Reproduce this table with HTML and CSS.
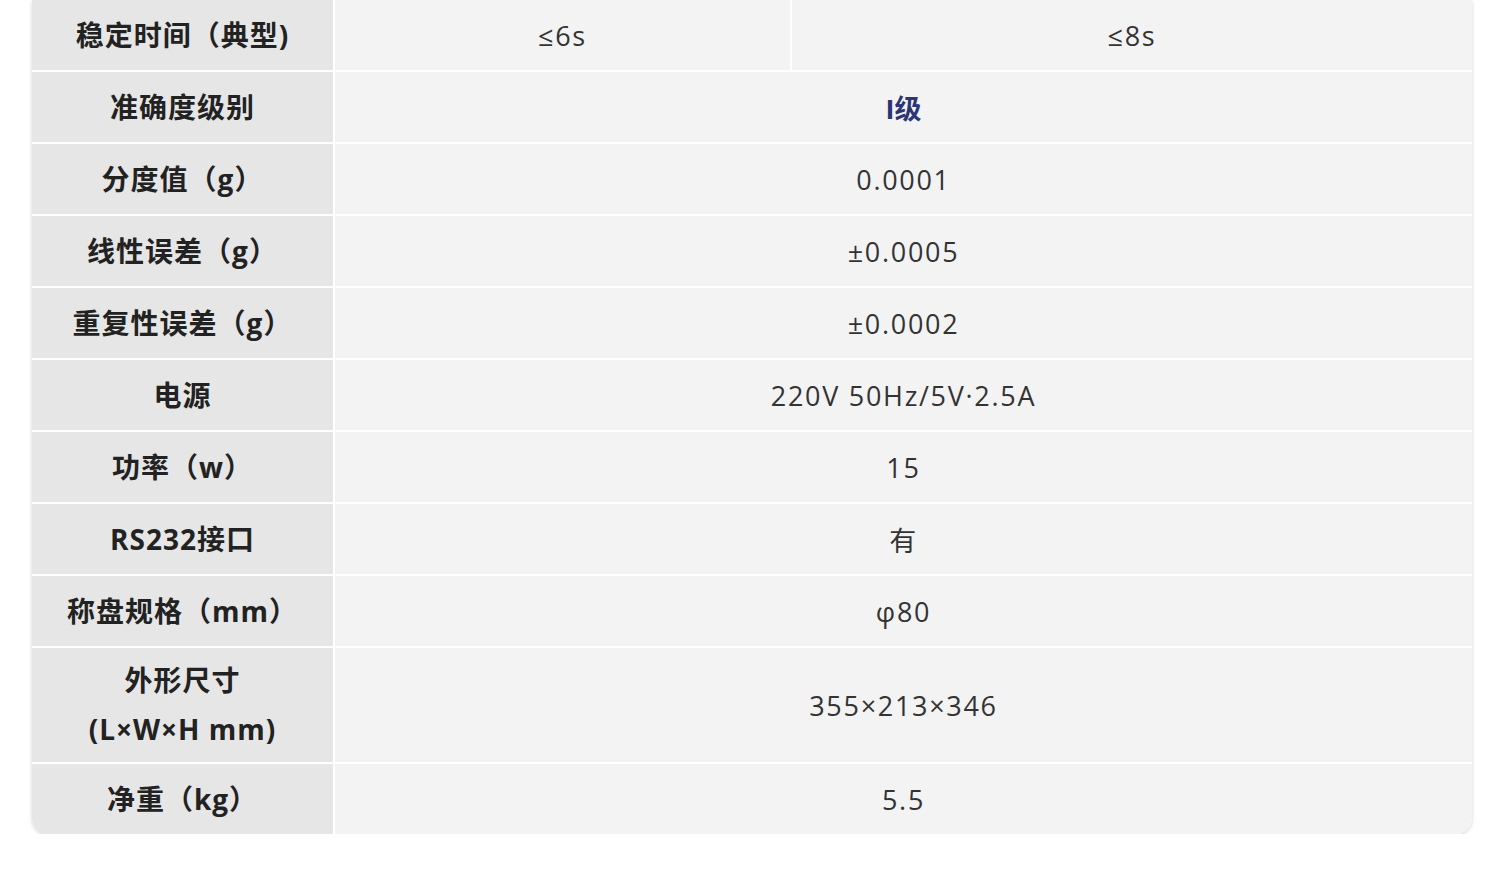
FILE: index.html
```html
<!DOCTYPE html>
<html lang="zh-CN">
<head>
<meta charset="utf-8">
<title>技术参数</title>
<link rel="stylesheet" href="styles.css">
</head>
<body>
<div class="card">
  <div class="spec">
    <div class="label">稳定时间（典型)</div>
    <div class="value">≤6s</div>
    <div class="value">≤8s</div>

    <div class="label">准确度级别</div>
    <div class="value span"><span class="accent">I级</span></div>

    <div class="label">分度值（g）</div>
    <div class="value span">0.0001</div>

    <div class="label">线性误差（g）</div>
    <div class="value span">±0.0005</div>

    <div class="label">重复性误差（g）</div>
    <div class="value span">±0.0002</div>

    <div class="label">电源</div>
    <div class="value span">220V 50Hz/5V·2.5A</div>

    <div class="label">功率（w）</div>
    <div class="value span">15</div>

    <div class="label">RS232接口</div>
    <div class="value span">有</div>

    <div class="label">称盘规格（mm）</div>
    <div class="value span">φ80</div>

    <div class="label">外形尺寸<br>(L×W×H mm)</div>
    <div class="value span">355×213×346</div>

    <div class="label">净重（kg）</div>
    <div class="value span">5.5</div>
  </div>
</div>
</body>
</html>
```

FILE: styles.css
```css
html, body {
  margin: 0;
  padding: 0;
  background: #ffffff;
}

body {
  font-family: "Open Sans", "Noto Sans CJK SC", sans-serif;
}

.card {
  margin-left: 32px;
  width: 1440px;
  border-radius: 0 0 16px 16px;
  overflow: hidden;
  box-shadow: 0 2px 4px rgba(0, 0, 0, 0.13), 0 0 3px rgba(0, 0, 0, 0.05);
  background: #ffffff;
}

.spec {
  display: grid;
  grid-template-columns: 301px 455px 680px;
  grid-template-rows: repeat(9, 70px) 114px 70px;
  gap: 2px;
  background: #ffffff;
}

.label,
.value {
  display: flex;
  align-items: center;
  justify-content: center;
  text-align: center;
}

.label {
  background: #e6e6e6;
  color: #222222;
  font-weight: 700;
  font-size: 28px;
  letter-spacing: 1px;
  line-height: 49px;
}

.value {
  background: #f3f3f3;
  color: #333333;
  font-size: 27px;
  letter-spacing: 1.7px;
}

.span {
  grid-column: 2 / 4;
}

.accent {
  color: #2c3674;
  font-weight: 700;
  letter-spacing: 0;
}
```
